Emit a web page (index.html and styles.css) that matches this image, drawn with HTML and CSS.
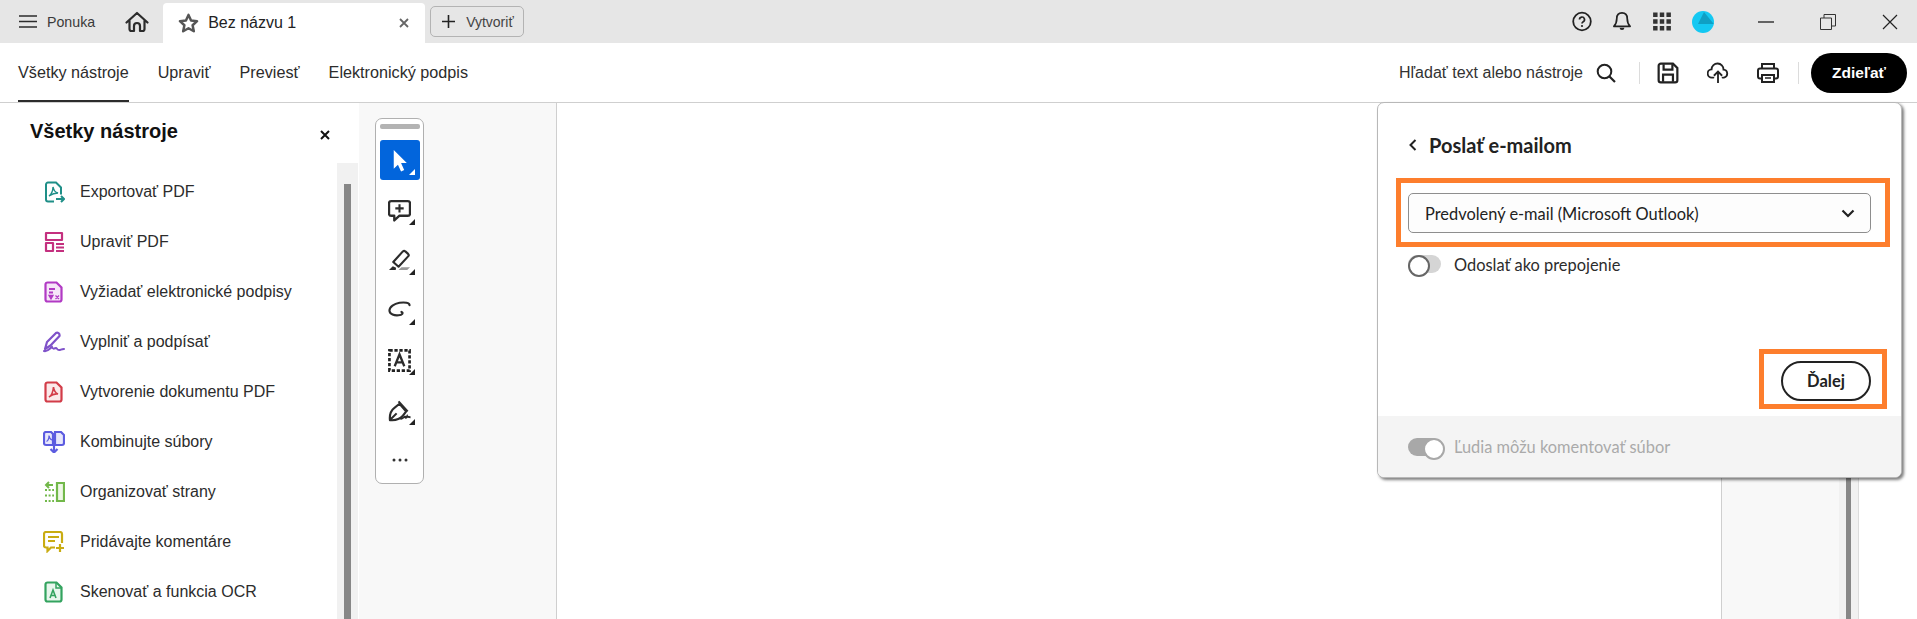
FILE: index.html
```html
<!DOCTYPE html>
<html lang="sk">
<head>
  <meta charset="UTF-8" />
  <title>Bez názvu 1</title>
  <link rel="stylesheet" href="styles.css">
</head>
<body>

  <div class="titlebar">
    <div class="menu-btn">
      <svg class="ic-menu" viewBox="0 0 18 13"><path d="M0 1h18M0 6.500h18M0 12h18" stroke="#2c2c2c" stroke-width="1.600" fill="none"/></svg>
      <span>Ponuka</span>
    </div>
    <svg class="ic-home" viewBox="0 0 24 22"><path d="M1.500 11.500 12 2l10.500 9.500M4.500 9.500v8.500a2 2 0 0 0 2 2h2.500v-5a3 3 0 0 1 6 0v5h2.500a2 2 0 0 0 2-2V9.500" fill="none" stroke="#2c2c2c" stroke-width="2.200" stroke-linejoin="round" stroke-linecap="round"/></svg>
    <div class="tab">
      <svg class="ic-star" viewBox="0 0 22 21"><path d="M11 2l2.700 5.900 6.300.7-4.700 4.300 1.300 6.300L11 16l-5.600 3.200 1.300-6.300L2 8.600l6.300-.7z" fill="none" stroke="#555" stroke-width="2.600" stroke-linejoin="round"/></svg>
      <span class="tab-name">Bez názvu 1</span>
      <svg class="ic-x" viewBox="0 0 10 10"><path d="M1 1l8 8M9 1l-8 8" stroke="#666" stroke-width="1.800" fill="none"/></svg>
    </div>
    <div class="new-btn">
      <svg class="ic-plus" viewBox="0 0 13 13"><path d="M6.500 0v13M0 6.500h13" stroke="#222" stroke-width="1.600"/></svg>
      <span>Vytvoriť</span>
    </div>

    <div class="title-right">
      <svg class="ic-top" viewBox="0 0 20 20"><circle cx="10" cy="10" r="8.800" fill="none" stroke="#222" stroke-width="1.800"/><path d="M7.500 8a2.500 2.500 0 1 1 3.700 2.200c-.8.500-1.200 1-1.200 1.800" fill="none" stroke="#222" stroke-width="1.700"/><circle cx="10" cy="14.500" r="1.100" fill="#222"/></svg>
      <svg class="ic-top" viewBox="0 0 20 22"><path d="M10 2c-3.500 0-5.500 2.600-5.500 6 0 4-1.100 6-3 8h17c-1.900-2-3-4-3-8 0-3.400-2-6-5.500-6z" fill="none" stroke="#222" stroke-width="1.800" stroke-linejoin="round"/><path d="M7.500 17.500h5a2.500 2.500 0 0 1-5 0z" fill="#222"/></svg>
      <svg class="ic-top" viewBox="0 0 18 18"><path d="M1 1h4v4H1zM7 1h4v4H7zM13 1h4v4h-4zM1 7h4v4H1zM7 7h4v4H7zM13 7h4v4h-4zM1 13h4v4H1zM7 13h4v4H7zM13 13h4v4h-4z" fill="#333"/></svg>
      <svg class="ic-avatar" viewBox="0 0 22 22"><circle cx="11" cy="11" r="11" fill="#14c8f2"/><path d="M12 1 21.800 13H6z" fill="#0f9fc4"/></svg>
      <div class="win-btns">
        <svg class="ic-win" viewBox="0 0 18 2"><path d="M0 1h18" stroke="#222" stroke-width="1.500"/></svg>
        <svg class="ic-win" viewBox="0 0 16 16"><path d="M.5 4h11v11.500H.5zM4 4V.5h11.500V12H12" fill="none" stroke="#333"/></svg>
        <svg class="ic-win" viewBox="0 0 16 16"><path d="M1 1l14 14M15 1L1 15" stroke="#222" stroke-width="1.200"/></svg>
      </div>
    </div>
  </div>

  <div class="navbar">
    <div class="nav-links">
      <a class="active">Všetky nástroje</a>
      <a>Upraviť</a>
      <a>Previesť</a>
      <a>Elektronický podpis</a>
    </div>
    <div class="nav-actions">
      <span class="search-text">Hľadať text alebo nástroje</span>
      <svg class="ic-search" viewBox="0 0 20 20"><circle cx="8.500" cy="8.500" r="6.800" fill="none" stroke="#222" stroke-width="2"/><path d="M13.500 13.500l5.500 5.500" stroke="#222" stroke-width="2.200"/></svg>
      <i class="sep"></i>
      <svg class="ic-act ic-save" viewBox="0 0 20 20"><path d="M3.500 1.500h11l4 4v11a2 2 0 0 1-2 2h-13a2 2 0 0 1-2-2v-13a2 2 0 0 1 2-2z" fill="none" stroke="#222" stroke-width="2"/><path d="M6 2v5h8V2M5.500 18v-6.500h9V18" fill="none" stroke="#222" stroke-width="2"/></svg>
      <svg class="ic-act" viewBox="0 0 24 22"><path d="M7 16H5.500a4.500 4.500 0 0 1-.5-9 6.500 6.500 0 0 1 13 .3 4.400 4.400 0 0 1 .5 8.700H17" fill="none" stroke="#222" stroke-width="2" stroke-linecap="round"/><path d="M12 22V10M7.500 14 12 9.500l4.500 4.500" fill="none" stroke="#222" stroke-width="2"/></svg>
      <svg class="ic-act" viewBox="0 0 22 21"><path d="M5 6V1.500h12V6M5 16H3a2 2 0 0 1-2-2V8a2 2 0 0 1 2-2h16a2 2 0 0 1 2 2v6a2 2 0 0 1-2 2h-2" fill="none" stroke="#222" stroke-width="2"/><path d="M5 12.500h12v7H5z" fill="none" stroke="#222" stroke-width="2"/><path d="M8 15.500h6" stroke="#222" stroke-width="1.500"/></svg>
      <i class="sep"></i>
      <button class="share-btn">Zdieľať</button>
    </div>
  </div>

  <div class="main">
    <aside class="sidebar">
      <div class="side-head">
        <h2>Všetky nástroje</h2>
        <svg class="ic-close" viewBox="0 0 10 10"><path d="M1 1l8 8M9 1l-8 8" stroke="#111" stroke-width="2" fill="none"/></svg>
      </div>
      <div class="side-body">
        <ul class="tool-list">
          <li><svg viewBox="0 0 22 22"><path d="M11 20.500H5a2 2 0 0 1-2-2v-15a2 2 0 0 1 2-2h8l5 5v7" fill="none" stroke="#1f8f88" stroke-width="2"/><path d="M6 15c2-1 4-5 4-9 1 4 2 5 5 6-3 0-6 1-9 3z" fill="none" stroke="#1f8f88" stroke-width="1.400"/><path d="M13 18h8M18 15l3 3-3 3" fill="none" stroke="#1f8f88" stroke-width="2"/></svg>Exportovať PDF</li>
          <li><svg viewBox="0 0 22 22"><path d="M3 2h16v7H3zM3 12h7v8H3z" fill="none" stroke="#c4307f" stroke-width="2.200" stroke-linejoin="round"/><path d="M13 13h8M13 16.500h8M13 20h8" stroke="#c4307f" stroke-width="1.800"/></svg>Upraviť PDF</li>
          <li><svg viewBox="0 0 22 22"><path d="M4.500 1.500h9l5 5v12a2 2 0 0 1-2 2h-12a2 2 0 0 1-2-2v-15a2 2 0 0 1 2-2z" fill="#f6e6f8" stroke="#b13ac4" stroke-width="2.200"/><path d="M6 8h6M6 11.500h4" stroke="#b13ac4" stroke-width="1.800"/><path d="M6 14.500h4l-2 3.500zM12.500 14.500l3.500 3.500M16 14.500L12.500 18" fill="#b13ac4" stroke="#b13ac4" stroke-width="1.300"/></svg>Vyžiadať elektronické podpisy</li>
          <li><svg viewBox="0 0 22 22"><path d="M2 18 4 11 13 2c1.500-1 4 .5 3.500 3L7.500 14.500z" fill="none" stroke="#7f52c9" stroke-width="2.200" stroke-linejoin="round"/><path d="M1 20c4 1 6-3 8-4 1 3 3 1 4 1s1 2 3 2 2-1 5-1" fill="none" stroke="#7f52c9" stroke-width="2" stroke-linecap="round"/></svg>Vyplniť a podpísať</li>
          <li><svg viewBox="0 0 22 22"><path d="M4.500 1.500h9l5 5v12a2 2 0 0 1-2 2h-12a2 2 0 0 1-2-2v-15a2 2 0 0 1 2-2z" fill="#fbe9ea" stroke="#d23c48" stroke-width="2.200"/><path d="M6 16c2-1 4-5 4.500-10 .5 4 2 6 4.500 7-3-.5-6 .5-9 3z" fill="none" stroke="#d23c48" stroke-width="1.600"/></svg>Vytvorenie dokumentu PDF</li>
          <li><svg viewBox="0 0 22 22"><path d="M10 3v11H3a2 2 0 0 1-2-2V3a2 2 0 0 1 2-2h5zM12 14V1h6l3 3v8a2 2 0 0 1-2 2z" fill="#e7e7fb" stroke="#5c5ce0" stroke-width="2.200"/><path d="M11 12v9M7.500 18l3.500 3.500 3.500-3.500" fill="none" stroke="#5c5ce0" stroke-width="2.200"/><path d="M3.500 10.500c2-1 2.500-3 2.500-6 .5 3 1 4 3 4.500" fill="none" stroke="#5c5ce0" stroke-width="1.200"/></svg>Kombinujte súbory</li>
          <li><svg viewBox="0 0 22 22"><path d="M14 2h7v18h-7z" fill="#eef7e6" stroke="#72b84a" stroke-width="2.200"/><path d="M10 4H3M6 1 3 4l3 3" fill="none" stroke="#72b84a" stroke-width="2"/><path d="M2 9h9M2 14.500h9M2 20h9" stroke="#72b84a" stroke-width="1.800" stroke-dasharray="2 1.600"/></svg>Organizovať strany</li>
          <li><svg viewBox="0 0 22 22"><path d="M12 16.500H8l-3.500 3.500v-3.500H3a2 2 0 0 1-2-2V3a2 2 0 0 1 2-2h14a2 2 0 0 1 2 2v9" fill="none" stroke="#c9ac12" stroke-width="2.200"/><path d="M5 6h11M5 10h7" stroke="#c9ac12" stroke-width="1.800"/><path d="M17 13v8M13 17h8" stroke="#c9ac12" stroke-width="2.200"/></svg>Pridávajte komentáre</li>
          <li><svg viewBox="0 0 22 22"><path d="M4.500 1.500h9l5 5v12a2 2 0 0 1-2 2h-12a2 2 0 0 1-2-2v-15a2 2 0 0 1 2-2z" fill="#e8f6ed" stroke="#33a35f" stroke-width="2.200"/><path d="M13 2v5h5" fill="none" stroke="#33a35f" stroke-width="1.500"/><path d="M7 17l3-8 3 8M8 14.500h4" fill="none" stroke="#33a35f" stroke-width="1.600"/></svg>Skenovať a funkcia OCR</li>
        </ul>
        <div class="scrolltrack"><div class="scrollthumb"></div></div>
      </div>
    </aside>

    <div class="tool-area">
      <div class="toolbar">
        <div class="grip"></div>
        <div class="tool selected">
          <svg viewBox="0 0 22 22"><path d="M5.500 1 18 13.500h-5.500l3 6.500-3 1.500-3-6.500-4 4z" fill="#fff"/></svg>
        </div>
        <div class="tool">
          <svg viewBox="0 0 22 22"><path d="M3 2h16a2 2 0 0 1 2 2v10a2 2 0 0 1-2 2h-8l-5 4.500V16H3a2 2 0 0 1-2-2V4a2 2 0 0 1 2-2z" fill="none" stroke="#2c2c2c" stroke-width="2.200" stroke-linejoin="round"/><path d="M11 5v8M7 9h8" stroke="#2c2c2c" stroke-width="2"/></svg>
        </div>
        <div class="tool">
          <svg viewBox="0 0 24 24"><path d="M5.500 13.500 15.500 2.500c.8-.8 1.800-.8 2.600 0l2.900 2.600c.8.800.8 1.800 0 2.600L11 18.500z" fill="none" stroke="#2c2c2c" stroke-width="2.200" stroke-linejoin="round"/><path d="M1 22l4-4 3.500 1.500-.5 2.500z" fill="#2c2c2c"/><path d="M11 22l3-3h9l-3 3z" fill="#999"/></svg>
        </div>
        <div class="tool">
          <svg viewBox="0 0 24 24"><path d="M22.500 6.500c0-2.500-5-3.500-10.500-2.500S1.500 8 1.500 12s5.500 5.500 9.500 5 5.500-2.500 3-3.500" fill="none" stroke="#2c2c2c" stroke-width="2.200" stroke-linecap="round"/></svg>
        </div>
        <div class="tool">
          <svg viewBox="0 0 24 24"><path d="M1.500 1.500h21v21h-21z" fill="none" stroke="#222" stroke-width="2.800" stroke-dasharray="3.400 1.800"/><path d="M7 18 12 5.500 17 18M8.500 14h7" fill="none" stroke="#2c2c2c" stroke-width="2.400"/></svg>
        </div>
        <div class="tool">
          <svg viewBox="0 0 24 24"><path d="M2 22c-.5-5 1-10 5-13l5-4 7 8-3.500 4.500c-3.500 4-8.500 5-13.500 4.500zM2 22l7-7M11 2.500l9.500 10.500" fill="none" stroke="#2c2c2c" stroke-width="2.200" stroke-linejoin="round"/><path d="M13 21c3-.5 4-3 5-2.500 0 1.500 1 1.500 2-.5.500 1 1 1 3.500 1" fill="none" stroke="#2c2c2c" stroke-width="2"/></svg>
        </div>
        <div class="tool more">
          <svg viewBox="0 0 16 4"><circle cx="2" cy="2" r="1.500" fill="#333"/><circle cx="8" cy="2" r="1.500" fill="#333"/><circle cx="14" cy="2" r="1.500" fill="#333"/></svg>
        </div>
      </div>
    </div>

    <div class="doc-page"></div>

    <div class="doc-right">
      <div class="doc-gutter"></div>
      <div class="doc-track"><div class="doc-thumb"></div></div>
    </div>

    <div class="popover">
      <div class="pop-main">
        <div class="pop-head">
          <svg class="ic-back" viewBox="0 0 8 12"><path d="M6.500 1 1.500 6l5 5" fill="none" stroke="#222" stroke-width="2"/></svg>
          <span>Poslať e-mailom</span>
        </div>
        <div class="mark mark-select">
          <div class="select">
            <span>Predvolený e-mail (Microsoft Outlook)</span>
            <svg class="ic-chev" viewBox="0 0 14 9"><path d="M1.500 1.500 7 7l5.500-5.500" fill="none" stroke="#222" stroke-width="2.200"/></svg>
          </div>
        </div>
        <div class="toggle-row">
          <span class="toggle"></span>
          <span>Odoslať ako prepojenie</span>
        </div>
        <div class="pop-actions">
          <div class="mark mark-btn"><button class="next-btn">Ďalej</button></div>
        </div>
      </div>
      <div class="pop-foot">
        <span class="toggle on"></span>
        <span>Ľudia môžu komentovať súbor</span>
      </div>
    </div>
  </div>

</body>
</html>
```

FILE: styles.css
```css
* {
  box-sizing: border-box;
}

html, body {
  height: 100%;
}

body {
  margin: 0;
  overflow: hidden;
  background: white;
  color: #2c2c2c;
  font-family: "Liberation Sans", Arial, sans-serif;
}

svg {
  display: block;
  flex: none;
}

/* title bar */
.titlebar {
  display: flex;
  align-items: flex-end;
  height: 43px;
  background-color: #e6e6e6;
}

.menu-btn {
  display: flex;
  align-items: center;
  align-self: center;
  gap: 10px;
  margin-left: 19px;
  font-size: 14.200px;
  color: #3a3a3a;
}

.ic-menu {
  width: 18px;
  height: 13px;
}

.ic-home {
  align-self: center;
  width: 24px;
  height: 22px;
  margin-left: 30px;
}

.tab {
  display: flex;
  align-items: center;
  width: 262px;
  height: 40px;
  margin-left: 14px;
  padding: 0 16px 0 15px;
  background: white;
  border-radius: 4px 4px 0 0;
}

.ic-star {
  width: 21px;
  height: 20px;
}

.tab-name {
  margin-left: 9px;
  font-size: 16px;
  color: #222;
}

.ic-x {
  width: 10px;
  height: 10px;
  margin-left: auto;
}

.new-btn {
  display: flex;
  align-items: center;
  align-self: center;
  gap: 11px;
  width: 94px;
  height: 31px;
  margin-left: 5px;
  padding-left: 11px;
  border: 1px solid #b3b3b3;
  border-radius: 5px;
  font-size: 14px;
  color: #444;
}

.ic-plus {
  width: 13px;
  height: 13px;
}

.title-right {
  display: flex;
  align-items: center;
  align-self: center;
  gap: 20px;
  margin-left: auto;
}

.ic-top {
  width: 20px;
  height: 21px;
}

.ic-avatar {
  width: 22px;
  height: 22px;
}

.win-btns {
  display: flex;
  align-items: center;
  gap: 46px;
  margin: 0 19px 0 24px;
}

.ic-win {
  width: 16px;
  height: 16px;
}

/* nav bar */
.navbar {
  display: flex;
  justify-content: space-between;
  height: 60px;
  border-bottom: 1px solid #cfcfcf;
}

.nav-links {
  display: flex;
  gap: 29px;
  padding-left: 18px;
}

.nav-links a {
  padding-top: 20px;
  font-size: 16.200px;
  color: #2c2c2c;
}

.nav-links a.active {
  border-bottom: 2px solid #2c2c2c;
  height: 59px;
}

.nav-actions {
  display: flex;
  align-items: center;
  padding-right: 10px;
}

.search-text {
  font-size: 16px;
  color: #333;
}

.ic-search {
  width: 20px;
  height: 20px;
  margin: 0 23px 0 13px;
}

.sep {
  width: 1px;
  height: 22px;
  background-color: #dcdcdc;
}

.ic-act {
  width: 22px;
  height: 22px;
  margin-left: 28px;
}

.ic-save {
  margin-left: 17px;
}

.sep:last-of-type {
  margin-left: 19px;
}

.share-btn {
  width: 96px;
  height: 40px;
  margin-left: 12px;
  border: none;
  border-radius: 20px;
  background-color: black;
  color: white;
  font-family: inherit;
  font-size: 15.500px;
  font-weight: bold;
}

/* main area */
.main {
  position: relative;
  display: flex;
  height: 516px;
}

.sidebar {
  display: flex;
  flex-direction: column;
  width: 359px;
  flex: none;
}

.side-head {
  display: flex;
  justify-content: space-between;
  height: 60px;
  padding: 17px 29px 0 30px;
}

.side-head h2 {
  margin: 0;
  font-size: 20px;
  color: #111;
}

.ic-close {
  width: 10px;
  height: 10px;
  margin-top: 10px;
}

.side-body {
  display: flex;
  flex: 1;
  min-height: 0;
}

.tool-list {
  flex: 1;
  margin: 0;
  padding: 4px 0 0 43px;
  list-style: none;
}

.tool-list li {
  display: flex;
  align-items: center;
  gap: 15px;
  height: 50px;
  font-size: 16px;
  color: #2c2c2c;
}

.tool-list svg {
  width: 22px;
  height: 22px;
}

.scrolltrack {
  width: 21px;
  margin-right: 1px;
  padding: 21px 7px 0;
  background-color: #f1f1f1;
}

.scrollthumb {
  height: 100%;
  background-color: #878787;
}

.tool-area {
  width: 198px;
  flex: none;
  padding: 15px 0 0 16px;
  background-color: #f8f8f8;
  border-right: 1px solid #cfcfcf;
}

.toolbar {
  display: flex;
  flex-direction: column;
  align-items: center;
  width: 49px;
  height: 366px;
  padding-top: 5px;
  background: white;
  border: 1px solid #b0b0b0;
  border-radius: 7px;
}

.grip {
  flex: none;
  width: 40px;
  height: 5px;
  margin-bottom: 11px;
  border-radius: 2px;
  background-color: #b3b3b3;
}

.tool {
  position: relative;
  display: flex;
  flex: none;
  align-items: center;
  justify-content: center;
  width: 40px;
  height: 40px;
  margin-bottom: 10px;
  border-radius: 3px;
}

.tool:last-child {
  margin-bottom: 0;
}

.tool svg {
  width: 23px;
  height: 23px;
}

.tool::after {
  content: "";
  position: absolute;
  right: 5px;
  bottom: 5px;
  border-style: solid;
  border-width: 0 0 6px 6px;
  border-color: transparent transparent #222 transparent;
}

.tool.selected {
  background-color: #0265dc;
}

.tool.selected::after {
  border-bottom-color: white;
}

.tool.more svg {
  width: 16px;
  height: 4px;
}

.tool.more::after {
  display: none;
}

.doc-page {
  width: 1164px;
  flex: none;
  background: white;
}

.doc-right {
  display: flex;
  width: 140px;
  flex: none;
}

.doc-gutter {
  width: 118px;
  background-color: #f8f8f8;
  border-left: 1px solid #cfcfcf;
}

.doc-track {
  width: 20px;
  padding: 0 7px;
  background-color: #f1f1f1;
  border-right: 1px solid #dcdcdc;
}

.doc-thumb {
  height: 100%;
  background-color: #878787;
}

/* share popover */
.popover {
  position: absolute;
  top: -1px;
  left: 1377px;
  width: 525px;
  height: 376px;
  display: flex;
  flex-direction: column;
  background: white;
  border: 1px solid #b8b8b8;
  border-radius: 7px;
  box-shadow: 2px 2px 3px rgba(0,0,0,0.5);
  overflow: hidden;
  font-family: Lato, "Noto Sans", sans-serif;
  font-size: 16.400px;
}

.pop-main {
  flex: 1;
  padding: 30px 0 0 30px;
}

.pop-head {
  display: flex;
  align-items: center;
  gap: 12px;
  height: 24px;
  font-size: 20px;
  font-weight: bold;
  color: #222;
}

.ic-back {
  width: 8px;
  height: 12px;
  margin-left: 1px;
}

.mark {
  border: 5px solid #fd7e2d;
}

.mark-select {
  width: 494px;
  height: 69px;
  margin: 21px 0 0 -12px;
  padding: 10px 14px 0 7px;
}

.select {
  display: flex;
  align-items: center;
  justify-content: space-between;
  height: 40px;
  padding: 0 15px 0 16px;
  background-color: #fdfdfd;
  border: 1px solid #8e8e8e;
  border-radius: 5px;
  color: #222;
}

.ic-chev {
  width: 14px;
  height: 9px;
}

.toggle-row {
  display: flex;
  align-items: center;
  gap: 13px;
  height: 18px;
  margin-top: 8px;
  color: #2c2c2c;
}

.toggle {
  position: relative;
  display: block;
  width: 33px;
  height: 18px;
  border-radius: 9px;
  background-color: #d5d5d5;
}

.toggle::after {
  content: "";
  position: absolute;
  top: 0;
  left: 0;
  width: 18px;
  height: 18px;
  border: 2px solid #666;
  border-radius: 50%;
  background: white;
}

.toggle.on {
  background-color: #a8a8a8;
}

.toggle.on::after {
  left: 15px;
  border-color: #a8a8a8;
}

.pop-actions {
  display: flex;
  justify-content: flex-end;
  margin-top: 76px;
  padding-right: 14px;
}

.mark-btn {
  width: 128px;
  height: 60px;
  padding: 7px 0 0 17px;
}

.next-btn {
  width: 90px;
  height: 40px;
  border: 2px solid #222;
  border-radius: 20px;
  background: white;
  color: #222;
  font-family: inherit;
  font-size: 16.500px;
  font-weight: bold;
}

.pop-foot {
  display: flex;
  align-items: center;
  gap: 13px;
  height: 61px;
  padding-left: 30px;
  background-color: #f4f4f4;
  color: #aaa;
}
```
